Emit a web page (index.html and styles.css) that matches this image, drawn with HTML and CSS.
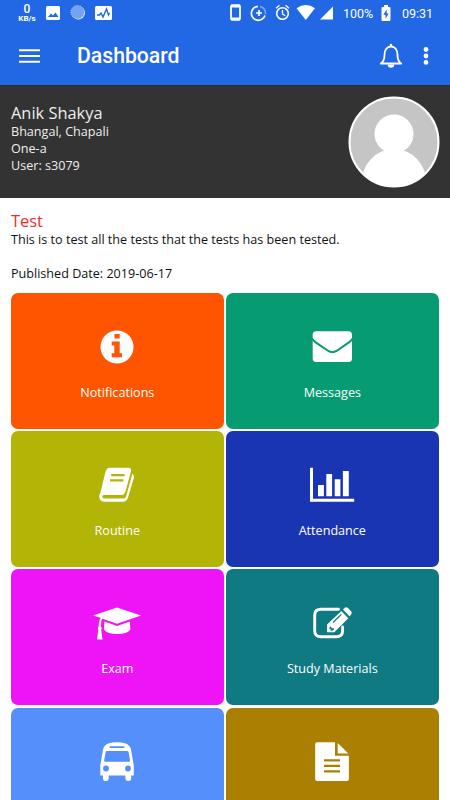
FILE: index.html
```html
<!doctype html>
<html lang="en"><head>
	<title>Dashboard</title>
	<meta charset="utf-8">
	<meta name="viewport" content="width=device-width, initial-scale=1">
	<link rel="stylesheet" href="styles.css">
</head><body>
	<header>
		<div class="statusbar">
			<div class="speed"><b>0</b><span>KB/s</span></div>
			<svg class="status-left" width="68" height="26" viewBox="45 0 68 26">
				<rect x="46" y="6" width="14" height="14" rx="1.5" fill="#fff"/>
				<path d="M48 17l3-3.500 2 2 2.500-3 3 4.500z" fill="#2268e4"/>
				<circle cx="78.500" cy="13" r="6.500" fill="#dce8fc"/>
				<circle cx="77.600" cy="12.200" r="6.700" fill="#75a2f1" stroke="#b6cef8" stroke-width="1" stroke-dasharray="1 1"/>
				<rect x="95" y="6" width="17" height="14" rx="1.500" fill="#fff"/>
				<path d="M97 15h2.500l1.500-2 2 4 3.500-8 2 6 1-2" fill="none" stroke="#2268e4" stroke-width="1.400"/>
			</svg>
			<svg class="status-right" width="106" height="26" viewBox="229 0 106 26" fill="none" stroke="#fff">
				<rect x="231" y="5.500" width="9" height="14" rx="1" stroke-width="1.800"/>
				<path d="M231 6h9M231 19h9" stroke-width="3"/>
				<path d="M258 6.300a7 7 0 1 0 7 9.200" stroke-width="1.700"/>
				<path d="M260 6.300a7 7 0 0 1 5.500 8" stroke-width="1.700" opacity=".4"/>
				<path d="M259 10v6M256 13h6" stroke-width="1.700"/>
				<circle cx="282.500" cy="13.500" r="5.800" stroke-width="1.500"/>
				<path d="M282.500 10v4l2.800 1.700M276 8.300l3.500-3M289 8.300l-3.500-3" stroke-width="1.300"/>
				<path d="M296.500 8.300q9.300-6.500 18.500 0L305.800 20z" fill="#fff" stroke="none"/>
				<path d="M333 6.500v13H320z" fill="#fff" stroke="none"/>
			</svg>
			<span class="percent">100%</span>
			<svg class="battery" width="10" height="17" viewBox="0 0 10 17">
				<path d="M3 0h4v2h1.500q1 0 1 1v12q0 1-1 1h-7q-1 0-1-1V3q0-1 1-1H3z" fill="#fff"/>
				<path d="M5.700 4.500L2.300 9.800h2.200v4L7.700 8.500H5.700z" fill="#2268e4"/>
			</svg>
			<span class="clock">09:31</span>
		</div>
		<div class="appbar">
			<svg width="21" height="14" viewBox="0 0 21 14">
				<path d="M0 1.200h21M0 7h21M0 12.700h21" stroke="#fff" stroke-width="2"/>
			</svg>
			<h1>Dashboard</h1>
			<svg class="bell" width="24" height="26" viewBox="0 0 24 26">
				<path d="M1.800 20.500c3-2 3.700-4 3.700-8.500 0-5 2.500-8.500 6.500-8.500s6.500 3.500 6.500 8.500c0 4.500.7 6.500 3.700 8.500z" fill="none" stroke="#fff" stroke-width="1.800" stroke-linejoin="round"/>
				<path d="M10.700 3.500V2a1.300 1.300 0 0 1 2.600 0v1.500zM8.700 21.500h6.600a3.300 3.300 0 0 1-6.600 0z" fill="#fff"/>
			</svg>
			<svg width="6" height="18" viewBox="0 0 6 18" fill="#fff">
				<circle cx="3" cy="2.500" r="2.400"/>
				<circle cx="3" cy="9" r="2.400"/>
				<circle cx="3" cy="15.400" r="2.400"/>
			</svg>
		</div>
	</header>

	<section class="profile">
		<div>
			<h2>Anik Shakya</h2>
			<p>Bhangal, Chapali</p>
			<p>One-a</p>
			<p>User: s3079</p>
		</div>
		<svg width="92" height="92" viewBox="0 0 92 92">
			<clipPath id="face"><circle cx="46" cy="46" r="44.500"/></clipPath>
			<circle cx="46" cy="46" r="44.500" fill="#c5c5c5"/>
			<g fill="#fff" clip-path="url(#face)">
				<circle cx="46" cy="38" r="19.500"/>
				<ellipse cx="46" cy="87" rx="32.500" ry="34"/>
			</g>
			<circle cx="46" cy="46" r="44.500" fill="none" stroke="#fff" stroke-width="2"/>
		</svg>
	</section>

	<section class="notice">
		<h2>Test</h2>
		<p>This is to test all the tests that the tests has been tested.</p>
		<p class="date">Published Date: 2019-06-17</p>
	</section>

	<nav class="tiles">
		<a class="tile notifications">
			<svg viewBox="0 0 50 44">
				<circle cx="25" cy="22" r="16.500" fill="#fff"/>
				<path d="M22.500 9h5.200v4.400h-5.200zM19.700 16.500h8v11.700H30v4.100H19.700v-4.100h2.600v-7.700h-2.600z" fill="#ff5500"/>
			</svg>
			<span>Notifications</span>
		</a>
		<a class="tile messages">
			<svg viewBox="0 0 50 44" fill="#fff">
				<path d="M9.200 6.300h32.200q3.600 0 3.600 3.500v23.700q0 3.500-3.600 3.500H9.200q-3.500 0-3.500-3.500V9.800q0-3.500 3.500-3.500z"/>
				<path d="M5 13.500q1.500 2.200 3.400 3.600l12.500 8.600q4.500 2.900 9 0l12.400-8.600q2-1.400 3.400-3.600" fill="none" stroke="#069b70" stroke-width="2"/>
			</svg>
			<span>Messages</span>
		</a>
		<a class="tile routine">
			<svg viewBox="0 0 50 44">
				<path d="M17.500 4.800h18.700q3.700 0 2.700 4l-5.500 19.800q-1 3.500-4 3.500H12.600q-2.300 0-2.300 1.200 0 2.200 3.200 2.200h18q1.900 0 2.600-2l5.700-20.800.3-2q2.500 1.200 1.700 4.300l-5.700 19.300q-1.300 4.400-5 4.400H12.700q-4.700 0-5.500-4.500-.3-2.200 1.300-5l4.800-19.700q1.200-4.700 4.200-4.700z" fill="#fff"/>
				<path d="M19.200 12.200h13.300M18 17.300h13.300" stroke="#b2b505" stroke-width="2.200"/>
			</svg>
			<span>Routine</span>
		</a>
		<a class="tile attendance">
			<svg viewBox="0 0 50 44" fill="#fff">
				<path d="M3 4.800h3v31h41.200v2.900H3zM11 22h5.900v11.200H11zM19.300 11h5.800v22.200h-5.800zM27.700 16.300h5.700v16.900h-5.700zM35.900 8h5.900v25.200h-5.900z"/>
			</svg>
			<span>Attendance</span>
		</a>
		<a class="tile exam">
			<svg viewBox="0 0 50 44" fill="#fff">
				<path d="M25 6.500l24 8-24 8.200-14.500-5-1 1.100-.6 6.700q1.600 1.300.3 3.400l1.300 9.500H5l1.200-9.500q-1.300-2 .4-3.400.1-5.500 2-8.700L1 14.500z"/>
				<path d="M12.400 20.600L25 24.900l12.800-4.300.6 8q-3.200 4.500-13.200 4.500t-13.300-4.500z"/>
			</svg>
			<span>Exam</span>
		</a>
		<a class="tile study">
			<svg viewBox="0 0 50 44">
				<path d="M31.500 8.300H14q-6.300 0-6.300 6v15.500q0 6 6.300 6h15.300q6.300 0 6.300-6V26" fill="none" stroke="#fff" stroke-width="2.900" stroke-linecap="round"/>
				<path d="M20.100 31.300v-7.800L34.300 10l7 7.200-14 14.100zM36 8.400l1.700-1.600q1.800-1.300 3.300.1l3 3q1.500 1.800.2 3.300l-1.600 2.200z" fill="#fff"/>
				<path d="M26 21.500l8.300-8.100" stroke="#0f7a82" stroke-width="1.300"/>
				<path d="M21.800 27.200l2-2 1 2h2l.2 1.300-1.500 1.300h-1.800v-1.500z" fill="#0f7a82"/>
			</svg>
			<span>Study Materials</span>
		</a>
		<a class="tile transport">
			<svg viewBox="0 0 50 44">
				<path d="M13 5.700Q15 2.200 25 2.200t12 3.500q2 1.500 2.500 6.700l2.300 12.800v10.300h-2.600v3q0 2.500-2.900 2.500t-2.900-2.500v-3H16.700v3q0 2.500-2.900 2.500T11 38.500v-3H8.300V25.200l2.200-12.800q.5-5.200 2.500-6.700z" fill="#fff"/>
				<path d="M18.300 6.200h13.500q.8 0 .8.900t-.8.900H18.300q-.8 0-.8-.9t.8-.9zM14.800 11h20.500q1 0 1.200 1l1.600 8.500q.2 1.300-1.200 1.300H13.300q-1.400 0-1.200-1.300L13.700 12q.1-1 1.100-1z" fill="#548ffc"/>
				<circle cx="14" cy="28.500" r="2.900" fill="#548ffc"/>
				<circle cx="36" cy="28.500" r="2.900" fill="#548ffc"/>
			</svg>
		</a>
		<a class="tile report">
			<svg viewBox="0 0 50 44">
				<path d="M10 2.200h18v13.500h13.900v23.200q0 2-2 2H10q-1.800 0-1.800-2V4.200q0-2 1.800-2z" fill="#fff"/>
				<path d="M30.700 3l10.600 10.600H30.700z" fill="#fff"/>
				<path d="M17 20.300h16M17 25.800h16M17 31.400h16" stroke="#aa8002" stroke-width="2.300"/>
			</svg>
		</a>
	</nav>
</body></html>
```
FILE: styles.css
```css
body {
	margin: 0;
	background: white;
	color: #111;
	font: 12.6px/17px 'Open Sans', 'Noto Sans', sans-serif;
}

h1, h2, p {
	margin: 0;
	font-weight: normal;
}

svg {
	display: block;
	flex: none;
}

header {
	height: 85px;
	background: #2268e4;
	color: white;
	font-family: Roboto, sans-serif;
}

.statusbar {
	display: flex;
	align-items: center;
	height: 26px;
	padding: 0 17px 0 17px;
	font-size: 12.5px;
}

.speed {
	display: flex;
	flex-direction: column;
	align-items: center;
	width: 20px;
}

.speed b {
	font-size: 12px;
	line-height: 12px;
	font-weight: 500;
}

.speed span {
	font-size: 8px;
	line-height: 8px;
	font-weight: 700;
}

.status-left {
	margin-left: 8px;
}

.status-right {
	margin-left: auto;
}

.percent {
	width: 30px;
	margin-left: 8px;
}

.battery {
	margin-left: 8px;
}

.clock {
	width: 31px;
	margin-left: 11px;
}

.appbar {
	display: flex;
	align-items: center;
	height: 59px;
	padding: 0 21px 0 19px;
}

h1 {
	flex: 1;
	margin-left: 37px;
	font-size: 21.2px;
	line-height: 30px;
	font-weight: 500;
}

.bell {
	margin-right: 20px;
}

.profile {
	display: flex;
	justify-content: space-between;
	box-sizing: border-box;
	height: 113px;
	padding: 10px 10.5px 0 11px;
	background: #333;
	color: #eee;
	border-top: 1px solid #2a2a2a;
}

.profile h2,
.notice h2 {
	font-size: 16.4px;
}

.profile h2 {
	padding-top: 6px;
	line-height: 21px;
}

.notice {
	height: 83px;
	padding: 12px 11px 0;
}

.notice h2 {
	line-height: 21px;
	color: #ee2a2a;
}

.date {
	margin-top: 17px;
}

.tiles {
	display: grid;
	grid-template-columns: 1fr 1fr;
	grid-template-rows: 135.8px 135.8px 135.8px 92.4px;
	gap: 2.4px;
	padding: 0 11.4px 0 11px;
}

.tile {
	display: flex;
	flex-direction: column;
	align-items: center;
	box-sizing: border-box;
	padding-top: 32px;
	border-radius: 7px;
	color: white;
}

.tile svg {
	width: 50px;
	height: 44px;
	margin-bottom: 14.6px;
}

.notifications { background: #ff5500; }
.messages { background: #069b70; }
.routine { background: #b2b505; }
.attendance { background: #1a35b2; }
.exam { background: #ef14f5; }
.study { background: #0f7a82; }

/* last row runs on below the screen */
.transport,
.report {
	border-radius: 7px 7px 0 0;
}

.transport { background: #548ffc; }
.report { background: #aa8002; }
```
